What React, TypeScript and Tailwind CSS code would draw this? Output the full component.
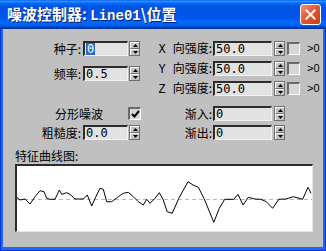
const CJK = "font-['Noto_Sans_CJK_SC',sans-serif]";

const CURVE = [
  [16, 196.7], [20, 200], [25, 199], [30, 204], [35, 196.7], [40, 190.7], [44, 191.7], [46.7, 198.3],
  [50, 199.3], [55, 199.3], [59.3, 190], [61.7, 194.3], [66.7, 192.7], [70, 194.3], [75, 199], [83.3, 199],
  [87.3, 195], [91.7, 206], [96.7, 195], [100, 188.3], [103.3, 189.3], [106.7, 201.7], [111.7, 201.7],
  [118.3, 196.7], [123.3, 193.3], [128.3, 192.3], [133.3, 196.7], [138.3, 201.7], [143.3, 205], [146.7, 199.3],
  [150, 203.3], [155, 198.3], [159.3, 192.7], [163, 199.3], [167.2, 211.7], [172.2, 213.3], [178.8, 198.3],
  [188, 181.7], [193, 185], [198.4, 187.3], [204.7, 200], [213.8, 222.3], [219.3, 208.3], [224.7, 199.3],
  [233.8, 199.3], [238, 194.3], [243, 205], [248.4, 197.3], [254.7, 199], [260.9, 199.3], [266.3, 201.7],
  [272.6, 208.3], [278.8, 199.3], [285.9, 199], [293.4, 196.7], [302.6, 199.3], [308, 187.3], [311, 193.3],
];

function Spinner() {
  return (
    <div className="flex h-[15px] w-[11px] flex-col border border-[#6e6e6e] bg-[#c4c4c4]">
      <div className="flex flex-1 items-center justify-center border-b border-[#6e6e6e] border-t border-l border-t-white border-l-white">
        <svg width="5" height="3" viewBox="0 0 5 3"><path d="M2.5 0 L5 3 L0 3 Z" fill="#000" /></svg>
      </div>
      <div className="flex flex-1 items-center justify-center border-t border-l border-t-white border-l-white">
        <svg width="5" height="3" viewBox="0 0 5 3"><path d="M0 0 L5 0 L2.5 3 Z" fill="#000" /></svg>
      </div>
    </div>
  );
}

function Field({ value, width, selected }: { value: string; width: string; selected?: boolean }) {
  return (
    <div
      className={`flex h-[15px] ${width} items-center border-t-2 border-l-2 border-b border-r border-t-[#2c2c2c] border-l-[#2c2c2c] border-b-[#f2f2f2] border-r-[#f2f2f2] bg-[#e2e2e2] pl-[1px] font-['DejaVu_Sans_Mono',monospace] text-[12px] leading-none text-black`}
    >
      {selected ? <span className="bg-[#316ac5] px-px text-white">{value}</span> : value}
    </div>
  );
}

function Box({ checked }: { checked?: boolean }) {
  return (
    <div className="flex h-[13px] w-[13px] items-center justify-center border-t-2 border-l-2 border-b border-r border-t-[#6a6a6a] border-l-[#6a6a6a] border-b-white border-r-white bg-[#d6d6d6]">
      {checked && (
        <svg width="9" height="9" viewBox="0 0 9 9">
          <path d="M1 4 L3.5 6.5 L8 1" fill="none" stroke="#000" strokeWidth="2" />
        </svg>
      )}
    </div>
  );
}

function LeftRow({ label, value, selected }: { label: string; value: string; selected?: boolean }) {
  return (
    <div className="flex h-[15px] items-center">
      <span className={`w-[78px] text-right ${CJK} text-[12px] leading-none`}>{label}</span>
      <div className="ml-[2px]"><Field value={value} width="w-[45px]" selected={selected} /></div>
      <div className="ml-[1px]"><Spinner /></div>
    </div>
  );
}

function AxisRow({ axis, className = '' }: { axis: string; className?: string }) {
  return (
    <div className={`flex h-[15px] items-center ${className}`}>
      <span className={`w-[62px] text-right ${CJK} text-[12px] leading-none`}>
        <span className="mr-[7px] font-['Liberation_Mono',monospace]">{axis}</span>向强度:
      </span>
      <div className="ml-[1px]"><Field value="50.0" width="w-[59px]" /></div>
      <div className="ml-[2px]"><Spinner /></div>
      <div className="ml-[2px]"><Box /></div>
      <span className="ml-[7px] font-['Liberation_Sans',sans-serif] text-[11px] leading-none">&gt;0</span>
    </div>
  );
}

function FadeRow({ label, className = '' }: { label: string; className?: string }) {
  return (
    <div className={`flex h-[15px] items-center ${className}`}>
      <span className={`w-[62px] text-right ${CJK} text-[12px] leading-none`}>{label}</span>
      <div className="ml-[1px]"><Field value="0" width="w-[59px]" /></div>
      <div className="ml-[2px]"><Spinner /></div>
    </div>
  );
}

export default function App() {
  const points = CURVE.map(([x, y]) => `${x},${y}`).join(' ');
  return (
    <div className="flex h-[251px] w-[326px] flex-col bg-[#0831d9] text-black">
      <div className="flex h-[29px] items-center bg-[linear-gradient(to_bottom,#0058ee_0%,#3593ff_4%,#288eff_6%,#127dff_8%,#036ffc_10%,#0262ee_14%,#0057e5_20%,#0054e3_24%,#0055eb_56%,#005bf5_66%,#026afe_76%,#0062ef_86%,#0052d6_92%,#0040ab_94%,#003092_100%)] pl-[7px] pr-[5px]">
        <span className={`flex-1 ${CJK} text-[15px] font-bold leading-none text-white [text-shadow:1px_1px_0_#0a1f73]`}>
          噪波控制器: <span className="font-['Liberation_Mono',monospace] text-[14px]">Line01</span>\位置
        </span>
        <div className="flex h-[21px] w-[21px] items-center justify-center rounded-[3px] border border-white bg-[linear-gradient(135deg,#f0957a_0%,#e2593a_45%,#c73a12_100%)]">
          <svg width="11" height="11" viewBox="0 0 11 11">
            <path d="M1.5 1.5 L9.5 9.5 M9.5 1.5 L1.5 9.5" stroke="#fff" strokeWidth="2" strokeLinecap="square" />
          </svg>
        </div>
      </div>

      <div className="flex-1 px-px pb-px">
        <div className="h-full border-x-2 border-b-[3px] border-[#1c68f0]">
          <div className="h-full bg-[#c0c0c0] pt-[12px]">
            <div className="flex">
              <div className="w-[147px]">
                <LeftRow label="种子:" value="0" selected />
                <div className="mt-[10px]"><LeftRow label="频率:" value="0.5" /></div>
              </div>
              <div>
                <AxisRow axis="X" />
                <AxisRow axis="Y" className="mt-[5px]" />
                <AxisRow axis="Z" className="mt-[5px]" />
              </div>
            </div>

            <div className="mt-[10px] flex">
              <div className="w-[147px]">
                <div className="flex h-[15px] items-center">
                  <span className={`ml-[52px] w-[73px] ${CJK} text-[12px] leading-none`}>分形噪波</span>
                  <Box checked />
                </div>
                <div className="mt-[4px]"><LeftRow label="粗糙度:" value="0.0" /></div>
              </div>
              <div>
                <FadeRow label="渐入:" />
                <FadeRow label="渐出:" className="mt-[4px]" />
              </div>
            </div>

            <div className={`ml-[12px] mt-[10px] h-[13px] ${CJK} text-[12px] leading-none`}>特征曲线图:</div>
            <div className="ml-[12px] mt-px h-[68px] w-[298px] border-t-2 border-l-2 border-b border-r border-t-[#2c2c2c] border-l-[#2c2c2c] border-b-[#e6e6e6] border-r-[#e6e6e6] bg-white">
              <svg className="block" width="295" height="65" viewBox="17 166 295 65">
                <line x1="17" y1="199.5" x2="312" y2="199.5" stroke="#b8b8b8" strokeDasharray="4 3" />
                <polyline points={points} fill="none" stroke="#000" strokeWidth="1" />
              </svg>
            </div>
          </div>
        </div>
      </div>
    </div>
  );
}
